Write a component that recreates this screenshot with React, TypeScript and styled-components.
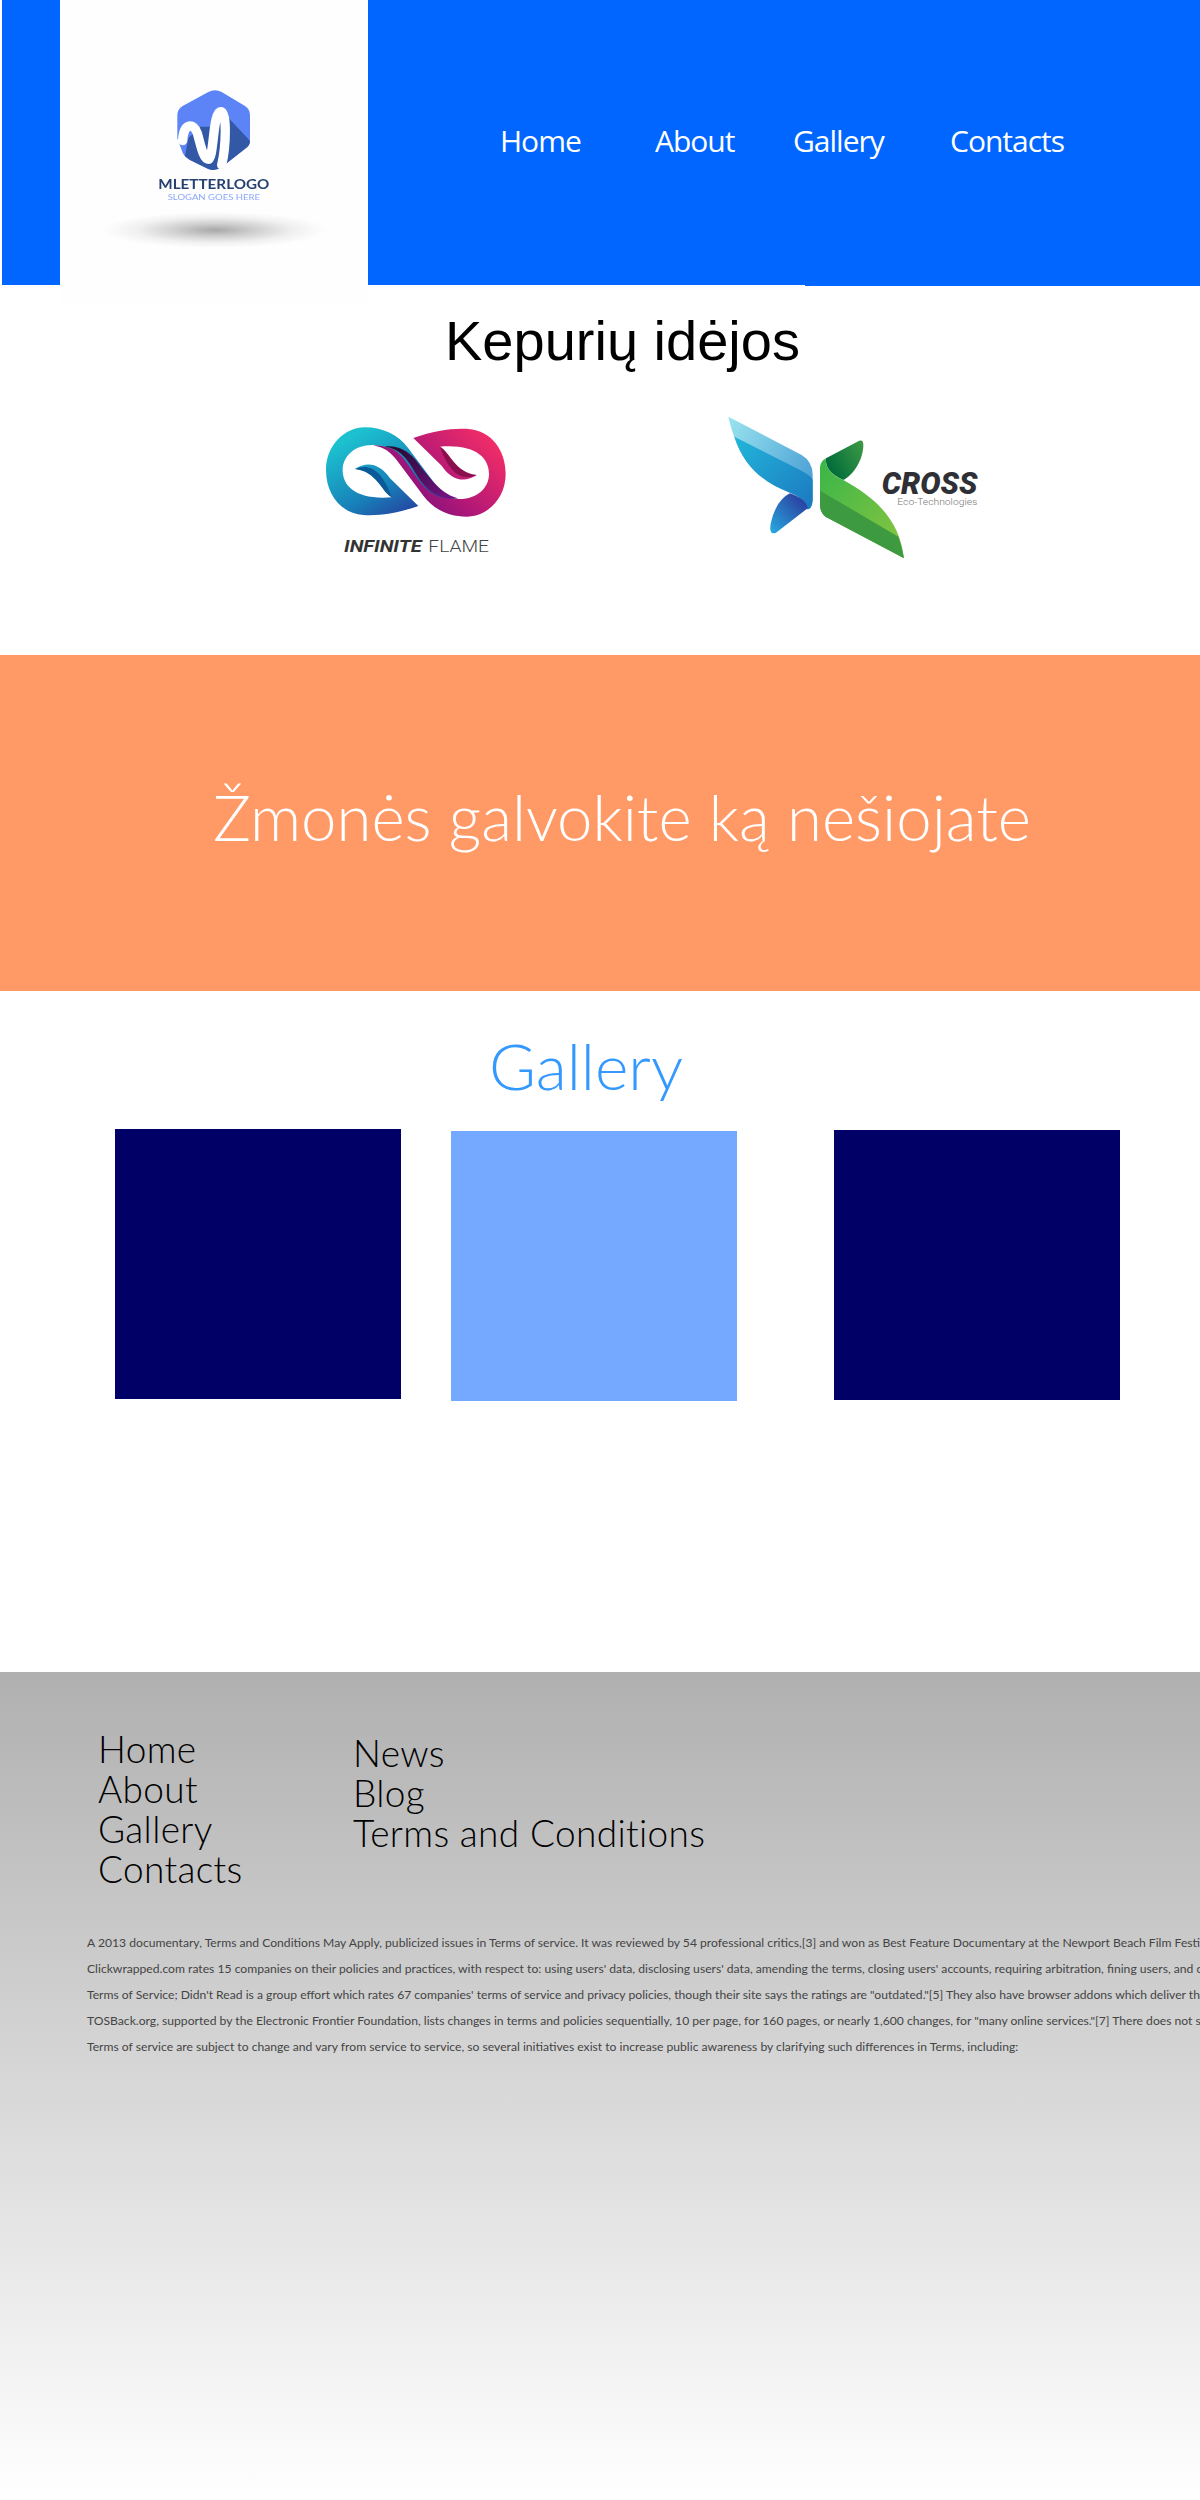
import React from "react"
import styled, { createGlobalStyle } from "styled-components"

const navItems = [
  { label: "Home", width: 155 },
  { label: "About", width: 138 },
  { label: "Gallery", width: 157 },
  { label: "Contacts", width: 114 },
]
const footerMain = ["Home", "About", "Gallery", "Contacts"]
const footerExtra = ["News", "Blog", "Terms and Conditions"]
const footerText = [
  "A 2013 documentary, Terms and Conditions May Apply, publicized issues in Terms of service. It was reviewed by 54 professional critics,[3] and won as Best Feature Documentary at the Newport Beach Film Festival.",
  "Clickwrapped.com rates 15 companies on their policies and practices, with respect to: using users' data, disclosing users' data, amending the terms, closing users' accounts, requiring arbitration, fining users, and clarity.",
  "Terms of Service; Didn't Read is a group effort which rates 67 companies' terms of service and privacy policies, though their site says the ratings are \"outdated.\"[5] They also have browser addons which deliver the ratings.",
  "TOSBack.org, supported by the Electronic Frontier Foundation, lists changes in terms and policies sequentially, 10 per page, for 160 pages, or nearly 1,600 changes, for \"many online services.\"[7] There does not seem to be.",
  "Terms of service are subject to change and vary from service to service, so several initiatives exist to increase public awareness by clarifying such differences in Terms, including:",
]

const gothic = `Lato, "Liberation Sans", sans-serif`

const GlobalStyle = createGlobalStyle`
  html, body {
    margin: 0;
    padding: 0;
    background: #fff;
  }
  body {
    width: 1200px;
    overflow: hidden;
  }
`

const Page = styled.div`
  width: 1200px;
  height: 2500px;
  overflow: hidden;
`

const Header = styled.header`
  height: 286px;
  margin-left: 2px;
  padding-left: 58px;
  display: flex;
  background:
    linear-gradient(#0066ff, #0066ff) 0 0 / 803px 285px no-repeat,
    linear-gradient(#0066ff, #0066ff) 803px 0 no-repeat;
`

const LogoBox = styled.div`
  width: 308px;
  height: 305px;
  flex: none;
  position: relative;
  background: #fefefe;
`

const Nav = styled.nav`
  display: flex;
  padding-left: 132px;
  padding-top: 119px;
`

const NavLink = styled.a<{ $width: number }>`
  width: ${(p) => p.$width}px;
  font: 400 30px/44px "Open Sans", sans-serif;
  color: #fff;
  letter-spacing: -1px;
`

const TitleSection = styled.section`
  height: 114px;
  padding-left: 445px;
`

const Title = styled.h1`
  margin: 0;
  font: 400 56px/110px "Liberation Sans", Arial, sans-serif;
  color: #000;
`

const Partners = styled.div`
  height: 255px;
  padding-left: 300px;
  display: flex;
  gap: 60px;
`

const Banner = styled.section`
  height: 336px;
  background: #ff9966;
  display: flex;
  align-items: center;
  padding-left: 213px;
`

const BannerText = styled.h2`
  margin: 0 0 12px;
  font: 300 63.5px/80px ${gothic};
  color: #fff;
`

const GallerySection = styled.section`
  height: 681px;
  padding-top: 40px;
  box-sizing: border-box;
`

const GalleryTitle = styled.h2`
  margin: 0 0 0 489px;
  font: 300 64px/70px ${gothic};
  color: #3399ff;
`

const Tiles = styled.div`
  display: flex;
  margin-top: 28px;
  padding-left: 115px;
`

const Tile = styled.div<{ $color: string; $left: number; $top: number }>`
  width: 286px;
  height: 270px;
  background: ${(p) => p.$color};
  margin-left: ${(p) => p.$left}px;
  margin-top: ${(p) => p.$top}px;
`

const Footer = styled.footer`
  height: 828px;
  box-sizing: border-box;
  padding-top: 57px;
  background: linear-gradient(#b0b0b0, #ffffff);
`

const FooterColumns = styled.div`
  display: flex;
  padding-left: 98px;
`

const FooterColumn = styled.div<{ $width?: number; $top?: number }>`
  width: ${(p) => (p.$width ? `${p.$width}px` : "auto")};
  margin-top: ${(p) => p.$top || 0}px;
`

const FooterLink = styled.div`
  font: 300 37px/40px ${gothic};
  letter-spacing: 0.35px;
  color: #000;
`

const FooterBody = styled.div`
  margin-top: 41px;
  padding-left: 87px;
`

const FooterLine = styled.p`
  margin: 0;
  font: 400 12.15px/26px ${gothic};
  color: #444;
  white-space: nowrap;
`

function MLetterLogo() {
  return (
    <svg width="308" height="305" viewBox="60 0 308 305" role="img" aria-label="MLetterLogo">
      <defs>
        <radialGradient id="logoShadow">
          <stop offset="0" stopColor="#a8a8a8" />
          <stop offset="0.35" stopColor="#cfcfcf" />
          <stop offset="0.7" stopColor="#f0f0f0" />
          <stop offset="1" stopColor="#fefefe" />
        </radialGradient>
        <filter id="soft">
          <feGaussianBlur stdDeviation="0.5" />
        </filter>
      </defs>
      <ellipse cx="215" cy="230" rx="112" ry="18" fill="url(#logoShadow)" />
      <g transform="translate(140 70) scale(0.3333)" filter="url(#soft)">
        <path d="M205 66 Q225 55 245 66 L315 108 Q330 118 330 135 V205 Q330 222 315 235 L245 292 Q225 305 205 297 L150 270 Q130 260 125 240 L112 205 V135 Q112 118 128 108 Z" fill="#5b84f7" />
        <path d="M135 258 L145 205 L180 170 L222 170 L240 125 L262 140 L330 212 Q332 225 315 237 L245 292 Q225 305 205 297 L150 270 Z" fill="#3159a6" />
        <path d="M128 212 C130 160 160 155 172 190 C182 225 190 268 205 268 C222 268 218 125 242 125 C262 125 258 230 245 285" fill="none" stroke="#fff" strokeWidth="28" strokeLinecap="round" />
        <text x="55" y="356" fontFamily="Lato, sans-serif" fontWeight="700" fontSize="42" fill="#27406f" textLength="333" lengthAdjust="spacingAndGlyphs">MLETTERLOGO</text>
        <text x="83" y="390" fontFamily="Lato, sans-serif" fontSize="25" fill="#8aa8f8" textLength="277" lengthAdjust="spacingAndGlyphs">SLOGAN GOES HERE</text>
      </g>
    </svg>
  )
}

const flamePath =
  "M355 318 C290 340 240 348 190 345 C120 340 78 280 78 210 C78 135 135 82 195 82 C250 82 295 105 325 145 L400 245 C420 275 445 293 475 295 C420 300 385 285 345 225 C320 185 295 145 255 140 C180 120 128 160 128 210 C128 260 170 300 275 292 C240 270 235 212 165 207 C200 183 240 190 270 235 Z"
const hookPath = "M165 207 C205 190 245 205 275 292 C245 275 230 215 165 207 Z"

function InfiniteFlame() {
  return (
    <svg width="340" height="180" viewBox="0 0 1020 540" role="img" aria-label="Infinite Flame">
      <defs>
        <linearGradient id="flameLeft" x1="0.1" y1="0.2" x2="0.8" y2="1">
          <stop offset="0" stopColor="#1cc0cf" />
          <stop offset="0.55" stopColor="#1780b8" />
          <stop offset="1" stopColor="#2b2f9a" />
        </linearGradient>
        <linearGradient id="flameRight" x1="0" y1="0.85" x2="1" y2="0.2">
          <stop offset="0" stopColor="#f92f66" />
          <stop offset="0.55" stopColor="#b01777" />
          <stop offset="1" stopColor="#5f0f80" />
        </linearGradient>
        <linearGradient id="flameBand" x1="0" y1="0" x2="1" y2="1">
          <stop offset="0" stopColor="#1f0b2c" />
          <stop offset="1" stopColor="#7a1388" />
        </linearGradient>
      </defs>
      <path d={flamePath} fill="url(#flameRight)" transform="rotate(180 347.5 216)" />
      <path d={hookPath} fill="#8a0f4f" transform="rotate(180 347.5 216)" />
      <path d={flamePath} fill="url(#flameLeft)" />
      <path d={hookPath} fill="#0a5a9a" />
      <path d="M255 140 C300 145 325 180 350 225 C385 282 425 300 475 295 C430 285 400 250 345 178 C320 150 290 135 255 140 Z" fill="url(#flameBand)" />
      <text x="132" y="457" fontFamily="Roboto, sans-serif" fontStyle="italic" fontWeight="700" fontSize="52" fill="#333" textLength="233" lengthAdjust="spacingAndGlyphs">INFINITE</text>
      <text x="385" y="457" fontFamily="Roboto, sans-serif" fontWeight="300" fontSize="52" fill="#444" textLength="182" lengthAdjust="spacingAndGlyphs">FLAME</text>
    </svg>
  )
}

function CrossLogo() {
  return (
    <svg width="300" height="180" viewBox="0 0 900 540" role="img" aria-label="Cross Eco-Technologies">
      <defs>
        <linearGradient id="wingTop" x1="0" y1="0" x2="1" y2="0.6">
          <stop offset="0" stopColor="#9ae4ef" />
          <stop offset="1" stopColor="#4ea3d6" />
        </linearGradient>
        <linearGradient id="wingMid" x1="0" y1="0" x2="1" y2="1">
          <stop offset="0" stopColor="#22b6da" />
          <stop offset="1" stopColor="#1c78c0" />
        </linearGradient>
        <linearGradient id="wingLow" x1="1" y1="0" x2="0" y2="1">
          <stop offset="0" stopColor="#2b2f96" />
          <stop offset="1" stopColor="#27aae1" />
        </linearGradient>
        <linearGradient id="leafTop" x1="0" y1="0.6" x2="1" y2="0">
          <stop offset="0" stopColor="#006b3a" />
          <stop offset="1" stopColor="#3f9b45" />
        </linearGradient>
        <linearGradient id="leafMid" x1="0" y1="0" x2="1" y2="1">
          <stop offset="0" stopColor="#38b549" />
          <stop offset="1" stopColor="#8dc63f" />
        </linearGradient>
      </defs>
      <path d="M85 50 L305 165 Q338 185 338 225 L338 300 Q336 328 322 328 C315 300 290 285 270 278 C170 240 115 180 85 50 Z" fill="url(#wingTop)" />
      <path d="M103 110 L300 210 Q335 228 338 240 L338 300 Q336 328 322 328 C315 300 290 285 270 278 C185 245 130 195 103 110 Z" fill="url(#wingMid)" />
      <path d="M270 280 Q320 298 323 325 L228 398 Q206 406 212 372 C222 322 245 292 270 280 Z" fill="url(#wingLow)" />
      <path d="M378 175 L472 125 Q490 115 490 135 C490 180 460 225 430 240 C395 225 375 205 378 175 Z" fill="url(#leafTop)" />
      <path d="M378 175 Q358 185 360 210 V318 Q362 345 385 355 L612 475 C600 370 540 300 430 240 C395 225 375 205 378 175 Z" fill="url(#leafMid)" />
      <path d="M360 272 L595 410 Q606 440 612 475 L385 355 Q362 345 360 318 Z" fill="#3d9a41" />
      <text x="545" y="283" fontFamily="Roboto, sans-serif" fontStyle="italic" fontWeight="900" fontSize="92" fill="#2f3035" textLength="287" lengthAdjust="spacingAndGlyphs">CROSS</text>
      <text x="592" y="315" fontFamily="Roboto, sans-serif" fontWeight="300" fontSize="27" fill="#777" textLength="240" lengthAdjust="spacingAndGlyphs">Eco-Technologies</text>
    </svg>
  )
}

export default function App() {
  return (
    <Page>
      <GlobalStyle />
      <Header>
        <LogoBox>
          <MLetterLogo />
        </LogoBox>
        <Nav>
          {navItems.map((item) => (
            <NavLink key={item.label} $width={item.width}>
              {item.label}
            </NavLink>
          ))}
        </Nav>
      </Header>
      <TitleSection>
        <Title>Kepurių idėjos</Title>
      </TitleSection>
      <Partners>
        <InfiniteFlame />
        <CrossLogo />
      </Partners>
      <Banner>
        <BannerText>Žmonės galvokite ką nešiojate</BannerText>
      </Banner>
      <GallerySection>
        <GalleryTitle>Gallery</GalleryTitle>
        <Tiles>
          <Tile $color="#000066" $left={0} $top={0} />
          <Tile $color="#75a8ff" $left={50} $top={2} />
          <Tile $color="#000066" $left={97} $top={1} />
        </Tiles>
      </GallerySection>
      <Footer>
        <FooterColumns>
          <FooterColumn $width={255}>
            {footerMain.map((link) => (
              <FooterLink key={link}>{link}</FooterLink>
            ))}
          </FooterColumn>
          <FooterColumn $top={4}>
            {footerExtra.map((link) => (
              <FooterLink key={link}>{link}</FooterLink>
            ))}
          </FooterColumn>
        </FooterColumns>
        <FooterBody>
          {footerText.map((line) => (
            <FooterLine key={line.slice(0, 20)}>{line}</FooterLine>
          ))}
        </FooterBody>
      </Footer>
    </Page>
  )
}
